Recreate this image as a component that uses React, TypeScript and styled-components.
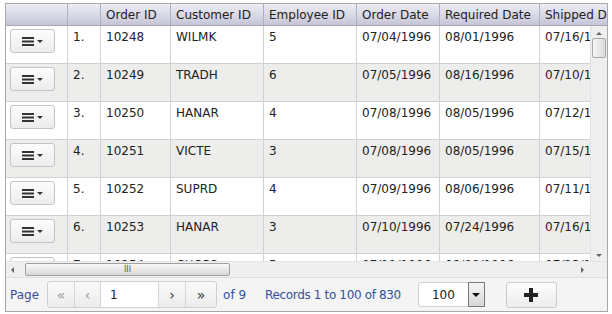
import React from "react";
import styled, { createGlobalStyle } from "styled-components";

const Global = createGlobalStyle`
  html, body { margin: 0; padding: 0; background: #fff; }
  body { font-family: "DejaVu Sans", Verdana, sans-serif; font-size: 12px; color: #222; }
  #root { padding: 3px 0 0 5px; }
`;

const COLS = [62, 33, 70, 93, 93, 83, 100, 100];
const HEAD = ["", "", "Order ID", "Customer ID", "Employee ID", "Order Date", "Required Date", "Shipped Date"];
const ROWS = [
  ["10248", "WILMK", "5", "07/04/1996", "08/01/1996", "07/16/1996"],
  ["10249", "TRADH", "6", "07/05/1996", "08/16/1996", "07/10/1996"],
  ["10250", "HANAR", "4", "07/08/1996", "08/05/1996", "07/12/1996"],
  ["10251", "VICTE", "3", "07/08/1996", "08/05/1996", "07/15/1996"],
  ["10252", "SUPRD", "4", "07/09/1996", "08/06/1996", "07/11/1996"],
  ["10253", "HANAR", "3", "07/10/1996", "07/24/1996", "07/16/1996"],
  ["10254", "CHOPS", "5", "07/11/1996", "08/08/1996", "07/23/1996"],
];

const Grid = styled.div`
  width: 603px;
  height: 309px;
  box-sizing: border-box;
  border: 1px solid #a8a8a8;
  display: flex;
  flex-direction: column;
  overflow: hidden;
`;

const Header = styled.div`
  display: flex;
  height: 22px;
  flex: none;
  box-sizing: border-box;
  border-bottom: 1px solid #a6a6b8;
  background: linear-gradient(#ededf3, #d6d6e4 60%, #c5c5d8);
  overflow: hidden;
`;

const HeadCell = styled.div<{ $w: number }>`
  flex: none;
  width: ${(p) => p.$w}px;
  box-sizing: border-box;
  border-right: 1px solid #b0b0c0;
  padding-left: 5px;
  display: flex;
  align-items: center;
  white-space: nowrap;
  overflow: hidden;
  color: #222;
`;

const Middle = styled.div`
  display: flex;
  height: 235px;
  flex: none;
`;

const Body = styled.div`
  width: 584px;
  overflow: hidden;
  flex: none;
`;

const Row = styled.div<{ $alt: boolean }>`
  display: flex;
  height: 38px;
  flex: none;
  box-sizing: border-box;
  border-bottom: 1px solid #d2d2d2;
  background: ${(p) => (p.$alt ? "#ededeb" : "#ffffff")};
`;

const Cell = styled.div<{ $w: number }>`
  flex: none;
  width: ${(p) => p.$w}px;
  box-sizing: border-box;
  border-right: 1px solid #d2d2d2;
  padding: 4px 0 0 5px;
  line-height: 14px;
  white-space: nowrap;
  overflow: hidden;
`;

const MenuCell = styled.div<{ $w: number }>`
  flex: none;
  width: ${(p) => p.$w}px;
  box-sizing: border-box;
  border-right: 1px solid #d2d2d2;
  padding: 3px 0 0 4px;
`;

const MenuButton = styled.div`
  width: 45px;
  height: 24px;
  box-sizing: border-box;
  border: 1px solid #c4c4c4;
  border-radius: 3px;
  background: linear-gradient(#fdfdfd, #ececec);
  display: flex;
  align-items: center;
  justify-content: center;
`;

const VScroll = styled.div`
  width: 17px;
  flex: none;
  background: #efefef;
  border-left: 1px solid #e2e2e2;
  box-sizing: border-box;
  display: flex;
  flex-direction: column;
  align-items: center;
  padding: 6px 0 4px;
`;

const VThumb = styled.div`
  width: 14px;
  height: 20px;
  margin-top: 3px;
  box-sizing: border-box;
  border: 1px solid #a8a8a8;
  border-radius: 2px;
  background: linear-gradient(90deg, #f6f6f6, #dcdcdc);
`;

const Spacer = styled.div`
  flex: 1;
`;

const HScrollRow = styled.div`
  display: flex;
  height: 16px;
  flex: none;
  background: #efefef;
  border-top: 1px solid #e4e4e4;
  box-sizing: border-box;
`;

const HScroll = styled.div`
  width: 584px;
  flex: none;
  display: flex;
  align-items: center;
  padding: 0 6px 0 5px;
  box-sizing: border-box;
`;

const HThumb = styled.div`
  width: 205px;
  height: 13px;
  margin-left: 11px;
  box-sizing: border-box;
  border: 1px solid #a0a0a0;
  border-radius: 2px;
  background: linear-gradient(#f8f8f8, #d8d8d8);
  display: flex;
  align-items: center;
  justify-content: center;
  font-size: 8px;
  color: #555;
`;

const Corner = styled.div`
  flex: 1;
  background: #efefef;
`;

const Pager = styled.div`
  flex: 1;
  display: flex;
  align-items: center;
  background: #f4f4f4;
  border-top: 1px solid #dedede;
  padding-left: 4px;
  color: #34509b;
`;

const PagerLabel = styled.span<{ $ml?: number; $tight?: boolean }>`
  margin-left: ${(p) => p.$ml ?? 0}px;
  color: #34509b;
  white-space: nowrap;
  letter-spacing: ${(p) => (p.$tight ? "-0.35px" : "0")};
`;

const NavGroup = styled.div`
  margin-left: 8px;
  display: flex;
  height: 27px;
  box-sizing: border-box;
  border: 1px solid #cfcfcf;
  border-radius: 3px;
  overflow: hidden;
  background: linear-gradient(#fafafa, #ececec);
`;

const NavBtn = styled.div<{ $w: number; $dim?: boolean; $last?: boolean }>`
  width: ${(p) => p.$w}px;
  box-sizing: border-box;
  border-right: ${(p) => (p.$last ? "none" : "1px solid #d4d4d4")};
  display: flex;
  align-items: center;
  justify-content: center;
  color: ${(p) => (p.$dim ? "#9a9a9a" : "#333")};
  font-size: 14px;
`;

const PageInput = styled.div`
  width: 58px;
  box-sizing: border-box;
  border-right: 1px solid #d4d4d4;
  background: #fff;
  display: flex;
  align-items: center;
  padding-left: 9px;
  color: #222;
`;

const Dropdown = styled.div`
  margin-left: 17px;
  width: 67px;
  height: 25px;
  box-sizing: border-box;
  border: 1px solid #d0d0d0;
  border-radius: 3px;
  background: #fff;
  display: flex;
`;

const DropValue = styled.div`
  flex: 1;
  display: flex;
  align-items: center;
  justify-content: center;
  color: #222;
`;

const DropArrow = styled.div`
  width: 17px;
  box-sizing: border-box;
  border: 1px solid #7a7a7a;
  margin: -1px -1px -1px 0;
  background: linear-gradient(#f6f6f6, #d6d6d6);
  display: flex;
  align-items: center;
  justify-content: center;
`;

const AddButton = styled.div`
  margin-left: 21px;
  width: 51px;
  height: 26px;
  box-sizing: border-box;
  border: 1px solid #cdcdcd;
  border-radius: 3px;
  background: linear-gradient(#fdfdfd, #ececec);
  display: flex;
  align-items: center;
  justify-content: center;
`;

const MenuIcon = () => (
  <svg width="22" height="9" viewBox="0 0 22 9">
    <rect x="0" y="0" width="12" height="2" fill="#333" />
    <rect x="0" y="3.5" width="12" height="2" fill="#333" />
    <rect x="0" y="7" width="12" height="2" fill="#333" />
    <polygon points="15,3 21,3 18,6" fill="#333" />
  </svg>
);

const Tri = ({ dir, size = 4, color = "#666" }: { dir: "up" | "down" | "left" | "right"; size?: number; color?: string }) => {
  const s = size;
  const pts =
    dir === "up"
      ? `0,${s} ${s * 2},${s} ${s},0`
      : dir === "down"
      ? `0,0 ${s * 2},0 ${s},${s}`
      : dir === "left"
      ? `${s},0 ${s},${s * 2} 0,${s}`
      : `0,0 0,${s * 2} ${s},${s}`;
  const w = dir === "up" || dir === "down" ? s * 2 : s;
  const h = dir === "up" || dir === "down" ? s : s * 2;
  return (
    <svg width={w} height={h} viewBox={`0 0 ${w} ${h}`}>
      <polygon points={pts} fill={color} />
    </svg>
  );
};

const PlusIcon = () => (
  <svg width="16" height="16" viewBox="0 0 16 16">
    <rect x="6" y="1" width="4" height="14" fill="#222" />
    <rect x="1" y="6" width="14" height="4" fill="#222" />
  </svg>
);

export default function App() {
  return (
    <>
      <Global />
      <Grid>
        <Header>
          {HEAD.map((h, i) => (
            <HeadCell key={i} $w={COLS[i]}>
              {h}
            </HeadCell>
          ))}
        </Header>
        <Middle>
          <Body>
            {ROWS.map((r, i) => (
              <Row key={i} $alt={i % 2 === 1}>
                <MenuCell $w={COLS[0]}>
                  <MenuButton>
                    <MenuIcon />
                  </MenuButton>
                </MenuCell>
                <Cell $w={COLS[1]}>{i + 1}.</Cell>
                {r.map((v, j) => (
                  <Cell key={j} $w={COLS[j + 2]}>
                    {v}
                  </Cell>
                ))}
              </Row>
            ))}
          </Body>
          <VScroll>
            <Tri dir="up" size={3} />
            <VThumb />
            <Spacer />
            <Tri dir="down" size={3} />
          </VScroll>
        </Middle>
        <HScrollRow>
          <HScroll>
            <Tri dir="left" size={3} />
            <HThumb>III</HThumb>
            <Spacer />
            <Tri dir="right" size={3} />
          </HScroll>
          <Corner />
        </HScrollRow>
        <Pager>
          <PagerLabel>Page</PagerLabel>
          <NavGroup>
            <NavBtn $w={27} $dim>«</NavBtn>
            <NavBtn $w={26} $dim>‹</NavBtn>
            <PageInput>1</PageInput>
            <NavBtn $w={27}>›</NavBtn>
            <NavBtn $w={30} $last>»</NavBtn>
          </NavGroup>
          <PagerLabel $ml={6}>of 9</PagerLabel>
          <PagerLabel $ml={19} $tight>Records 1 to 100 of 830</PagerLabel>
          <Dropdown>
            <DropValue>100</DropValue>
            <DropArrow>
              <Tri dir="down" size={4} color="#111" />
            </DropArrow>
          </Dropdown>
          <AddButton>
            <PlusIcon />
          </AddButton>
        </Pager>
      </Grid>
    </>
  );
}
